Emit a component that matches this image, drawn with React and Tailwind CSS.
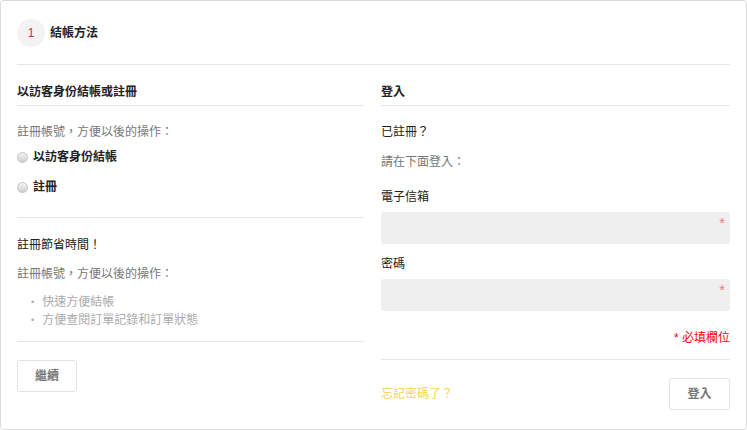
import React from 'react';

const font = { fontFamily: '"Liberation Sans", "Noto Sans CJK TC", sans-serif' };

// Unchecked radio, drawn to look like the old native control
const Radio = () => (
  <span className="inline-block w-[11px] h-[11px] rounded-full border border-[#c4c4c4] bg-gradient-to-b from-[#f4f4f4] to-[#cfcfcf]" />
);

const RequiredInput = () => (
  <div className="relative h-[32px] w-full rounded-[3px] bg-[#efefef]">
    <span className="absolute right-[5px] top-[3px] text-[15px] leading-[16px] text-[#f27c7c]">*</span>
  </div>
);

const SectionTitle = ({ children }) => (
  <div className="mt-[19px] pb-[5px] border-b border-[#e6e6e6] text-[12px] leading-[16px] font-bold text-[#222]">
    {children}
  </div>
);

const GuestColumn = () => (
  <div className="flex flex-col">
    <SectionTitle>以訪客身份結帳或註冊</SectionTitle>
    <p className="mt-[18px] text-[12px] leading-[16px] text-[#777]">註冊帳號，方便以後的操作：</p>
    <label className="mt-[9px] flex items-center gap-[5px] text-[12px] leading-[16px] font-bold text-[#222]">
      <Radio />
      <span>以訪客身份結帳</span>
    </label>
    <label className="mt-[14px] flex items-center gap-[5px] text-[12px] leading-[16px] font-bold text-[#222]">
      <Radio />
      <span>註冊</span>
    </label>
    <div className="mt-[22px] border-t border-[#e6e6e6]" />
    <p className="mt-[19px] text-[12px] leading-[16px] text-[#222]">註冊節省時間！</p>
    <p className="mt-[13px] text-[12px] leading-[16px] text-[#777]">註冊帳號，方便以後的操作：</p>
    <ul className="mt-[11px] pl-[14px] text-[12px] leading-[18px] text-[#aaa]">
      <li className="flex items-center gap-[8px]"><span className="text-[9px]">•</span>快速方便結帳</li>
      <li className="flex items-center gap-[8px]"><span className="text-[9px]">•</span>方便查閱訂單記錄和訂單狀態</li>
    </ul>
    <div className="mt-[12px] border-t border-[#e6e6e6]" />
    <button className="mt-[18px] w-[60px] h-[32px] rounded-[3px] border border-[#e3e3e3] bg-white text-[12px] font-bold text-[#777]">
      繼續
    </button>
  </div>
);

const LoginColumn = () => (
  <div className="flex flex-col">
    <SectionTitle>登入</SectionTitle>
    <p className="mt-[18px] text-[12px] leading-[16px] text-[#222]">已註冊？</p>
    <p className="mt-[14px] text-[12px] leading-[16px] text-[#777]">請在下面登入：</p>
    <p className="mt-[19px] text-[12px] leading-[16px] text-[#222]">電子信箱</p>
    <div className="mt-[7px]"><RequiredInput /></div>
    <p className="mt-[12px] text-[12px] leading-[16px] text-[#222]">密碼</p>
    <div className="mt-[7px]"><RequiredInput /></div>
    <p className="mt-[19px] text-right text-[12px] leading-[16px] text-[#ff0000]">* 必填欄位</p>
    <div className="mt-[13px] border-t border-[#e6e6e6]" />
    <div className="mt-[18px] flex items-center justify-between">
      <a className="text-[12px] leading-[16px] text-[#f7d35a]">忘記密碼了？</a>
      <button className="w-[61px] h-[32px] rounded-[3px] border border-[#e3e3e3] bg-white text-[12px] font-bold text-[#777]">
        登入
      </button>
    </div>
  </div>
);

export default function App() {
  return (
    <div className="w-[747px] h-[430px] bg-white" style={font}>
      <div className="h-full w-full rounded-[3px] border border-[#dcdcdc] px-[16px]">
        <div className="h-[64px] flex items-center gap-[5px] border-b border-[#e6e6e6]">
          <div className="w-[28px] h-[28px] rounded-full bg-[#f3f3f3] flex items-center justify-center text-[12px] text-[#c0392b]">
            1
          </div>
          <span className="text-[12px] font-bold text-[#222]">結帳方法</span>
        </div>
        <div className="grid grid-cols-[347px_1fr] gap-[17px]">
          <GuestColumn />
          <LoginColumn />
        </div>
      </div>
    </div>
  );
}
